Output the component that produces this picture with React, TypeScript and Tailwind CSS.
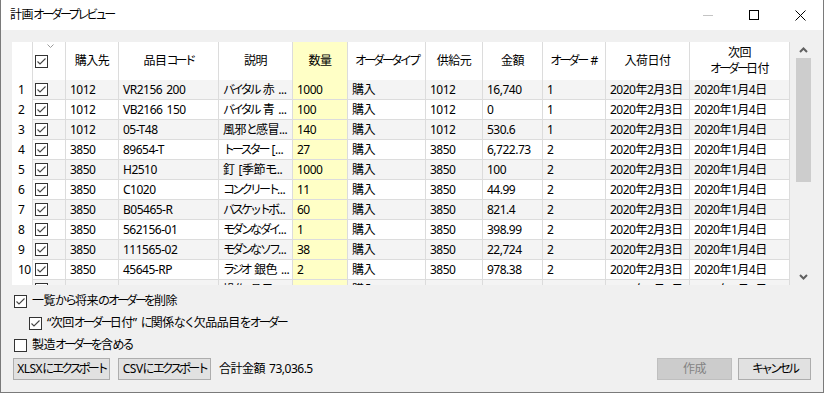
import React from 'react';

// narrow the kana runs a bit, the reference font sets them proportional
function J({ t }: { t: string }) {
  const parts = t.split(/([\u3040-\u309F]+|[\u30A0-\u30FF]+)/);
  return (
    <>
      {parts.map((p, i) => {
        if (/^[\u30A0-\u30FF]+$/.test(p)) {
          return (
            <span key={i} className="tracking-[-3px]">
              {p}
            </span>
          );
        }
        if (/^[\u3040-\u309F]+$/.test(p)) {
          return (
            <span key={i} className="tracking-[-2px]">
              {p}
            </span>
          );
        }
        return <React.Fragment key={i}>{p}</React.Fragment>;
      })}
    </>
  );
}

interface Col {
  key: string;
  label: React.ReactNode;
  w: string;
}

const cols: Col[] = [
  { key: 'vendor', label: <J t="購入先" />, w: 'w-[53px]' },
  { key: 'code', label: <J t="品目コード" />, w: 'w-[100px]' },
  { key: 'desc', label: <J t="説明" />, w: 'w-[74px]' },
  { key: 'qty', label: <J t="数量" />, w: 'w-[55px]' },
  { key: 'type', label: <J t="オーダータイプ" />, w: 'w-[78px]' },
  { key: 'supplier', label: <J t="供給元" />, w: 'w-[57px]' },
  { key: 'amount', label: <J t="金額" />, w: 'w-[60px]' },
  { key: 'order', label: <J t="オーダー #" />, w: 'w-[63px]' },
  { key: 'arrival', label: <J t="入荷日付" />, w: 'w-[84px]' },
  {
    key: 'next',
    label: (
      <>
        <J t="次回" />
        <br />
        <J t="オーダー日付" />
      </>
    ),
    w: 'w-[100px]',
  },
];

const rows: string[][] = [
  ['1012', 'VR2156 200', 'バイタル 赤 ...', '1000', '購入', '1012', '16,740', '1'],
  ['1012', 'VB2166 150', 'バイタル 青 ...', '100', '購入', '1012', '0', '1'],
  ['1012', '05-T48', '風邪と感冒...', '140', '購入', '1012', '530.6', '1'],
  ['3850', '89654-T', 'トースター [...', '27', '購入', '3850', '6,722.73', '2'],
  ['3850', 'H2510', '釘 [季節モ...', '1000', '購入', '3850', '100', '2'],
  ['3850', 'C1020', 'コンクリート...', '11', '購入', '3850', '44.99', '2'],
  ['3850', 'B05465-R', 'バスケットボ...', '60', '購入', '3850', '821.4', '2'],
  ['3850', '562156-01', 'モダンなダイ...', '1', '購入', '3850', '398.99', '2'],
  ['3850', '111565-02', 'モダンなソフ...', '38', '購入', '3850', '22,724', '2'],
  ['3850', '45645-RP', 'ラジオ 銀色 ...', '2', '購入', '3850', '978.38', '2'],
  ['3850', '40145', '操作 品目 ...', '', '購入', '3850', '', ''],
];

function Check({ checked = true }: { checked?: boolean }) {
  return (
    <svg width="13" height="13" viewBox="0 0 13 13" className="shrink-0">
      <rect x="0.5" y="0.5" width="12" height="12" fill="#fff" stroke="#333" />
      {checked && <polyline points="2.5,6.5 5,9 10.5,3.5" fill="none" stroke="#444" strokeWidth="1.1" />}
    </svg>
  );
}

function Option({ label, checked, indent }: { label: string; checked: boolean; indent?: boolean }) {
  return (
    <div className={`flex h-[22px] items-center gap-[5px] ${indent ? 'pl-[17px]' : 'pl-[2px]'}`}>
      <Check checked={checked} />
      <span className="whitespace-nowrap">
        <J t={label} />
      </span>
    </div>
  );
}

export default function App() {
  return (
    <div className="flex h-[393px] w-[824px] flex-col border-x border-b border-[#7a7a7a] bg-[#f0f0f0] font-['Noto_Sans','Noto_Sans_CJK_JP',sans-serif] text-[12px] leading-[14px] tracking-[-0.5px] text-black [word-spacing:1.5px]">
      {/* title bar */}
      <div className="flex h-[30px] shrink-0 items-center bg-white">
        <div className="flex-1 pl-[9px]">
          <J t="計画オーダープレビュー" />
        </div>
        <div className="flex h-full w-[46px] items-center justify-center">
          <svg width="10" height="10" viewBox="0 0 10 10">
            <line x1="0" y1="5.5" x2="10" y2="5.5" stroke="#c4c4c4" />
          </svg>
        </div>
        <div className="flex h-full w-[46px] items-center justify-center">
          <svg width="10" height="10" viewBox="0 0 10 10">
            <rect x="0.5" y="0.5" width="9" height="9" fill="none" stroke="#000" />
          </svg>
        </div>
        <div className="flex h-full w-[46px] items-center justify-center">
          <svg width="11" height="11" viewBox="0 0 11 11">
            <path d="M0.5 0.5 L10.5 10.5 M10.5 0.5 L0.5 10.5" stroke="#000" strokeWidth="1" />
          </svg>
        </div>
      </div>

      <div className="flex flex-1 flex-col pl-[11px] pr-[10px] pt-[12px]">
        {/* grid */}
        <div className="flex h-[243px] w-[800px] overflow-hidden bg-[#f0f0f0]">
          <div className="w-[778px] shrink-0 bg-white">
            <div className="flex h-[38px] bg-white">
              <div className="w-[20px] shrink-0" />
              <div className="relative flex w-[34px] shrink-0 items-center border-x border-[#dcdcdc] pl-[2px]">
                <svg width="7" height="4" viewBox="0 0 7 4" className="absolute left-[14px] top-[2px]">
                  <polyline points="0.5,0.5 3.5,3.5 6.5,0.5" fill="none" stroke="#9a9a9a" />
                </svg>
                <div className="mt-[1px]">
                  <Check />
                </div>
              </div>
              {cols.map((c) => (
                <div
                  key={c.key}
                  className={`${c.w} flex shrink-0 items-center justify-center whitespace-nowrap border-r border-[#dcdcdc] text-center ${
                    c.key === 'qty' ? 'bg-[#ffffc6]' : ''
                  }`}
                >
                  <span className="leading-[16px]">{c.label}</span>
                </div>
              ))}
            </div>
            {rows.map((r, i) => {
              const odd = i % 2 === 0;
              return (
                <div key={i} className="flex h-[20px]">
                  <div className="flex w-[20px] shrink-0 items-center bg-white pl-[6px]">{i + 1}</div>
                  <div
                    className={`flex w-[34px] shrink-0 items-center border-x border-b border-[#dcdcdc] pl-[2px] ${
                      odd ? 'bg-[#f4f4f4]' : 'bg-white'
                    }`}
                  >
                    <Check />
                  </div>
                  {cols.map((c, j) => {
                    let text = r[j] ?? '';
                    if (c.key === 'arrival') text = '2020年2月3日';
                    if (c.key === 'next') text = '2020年1月4日';
                    const bg = c.key === 'qty' ? 'bg-[#ffffc6]' : odd ? 'bg-[#f4f4f4]' : 'bg-white';
                    return (
                      <div
                        key={c.key}
                        className={`${c.w} ${bg} flex shrink-0 items-center overflow-hidden whitespace-nowrap border-b border-r border-[#dcdcdc] pl-[4px]`}
                      >
                        <span>
                          <J t={text} />
                        </span>
                      </div>
                    );
                  })}
                </div>
              );
            })}
          </div>
          <div className="w-[5px] shrink-0" />
          {/* scrollbar */}
          <div className="flex w-[17px] shrink-0 flex-col bg-[#f0f0f0]">
            <div className="flex h-[16px] items-center justify-center">
              <svg width="9" height="6" viewBox="0 0 9 6">
                <polyline points="1,5 4.5,1.5 8,5" fill="none" stroke="#606060" strokeWidth="2" />
              </svg>
            </div>
            <div className="mx-[1px] h-[124px] bg-[#cdcdcd]" />
            <div className="flex-1" />
            <div className="flex h-[16px] items-center justify-center">
              <svg width="9" height="6" viewBox="0 0 9 6">
                <polyline points="1,1 4.5,4.5 8,1" fill="none" stroke="#606060" strokeWidth="2" />
              </svg>
            </div>
          </div>
        </div>

        {/* options */}
        <div className="mt-[5px] flex flex-col">
          <Option label="一覧から将来のオーダーを削除" checked />
          <Option label="“次回オーダー日付” に関係なく欠品品目をオーダー" checked indent />
          <Option label="製造オーダーを含める" checked={false} />
        </div>

        {/* buttons */}
        <div className="mt-[2px] flex items-center whitespace-nowrap">
          <button className="ml-[1px] flex h-[22px] w-[97px] items-center justify-center border border-[#adadad] bg-[#e1e1e1]">
            <J t="XLSXにエクスポート" />
          </button>
          <button className="ml-[8px] flex h-[22px] w-[93px] items-center justify-center border border-[#adadad] bg-[#e1e1e1]">
            <J t="CSVにエクスポート" />
          </button>
          <span className="ml-[8px]">合計金額 73,036.5</span>
          <div className="flex-1" />
          <button className="flex h-[22px] w-[75px] items-center justify-center border border-[#bfbfbf] bg-[#cccccc] text-[#838383]">
            作成
          </button>
          <button className="ml-[6px] mr-[2px] flex h-[22px] w-[73px] items-center justify-center border border-[#adadad] bg-[#e1e1e1]">
            <J t="キャンセル" />
          </button>
        </div>
      </div>
    </div>
  );
}
